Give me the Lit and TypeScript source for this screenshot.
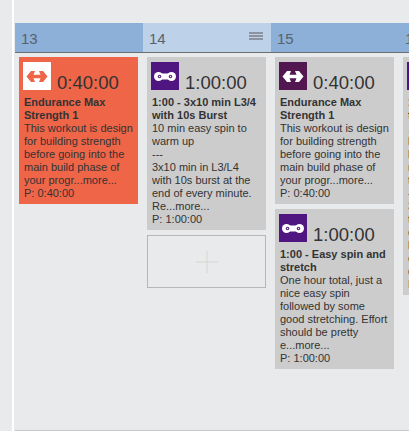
import { LitElement, html, css, svg } from 'lit';
import { customElement } from 'lit/decorators.js';

type Kind = 'strength' | 'bike';

interface Workout {
  kind: Kind;
  tone: string;
  duration: string;
  title: string[];
  body: string[];
  planned: string;
}

const dumbbell = (fill: string) => svg`
  <path fill=${fill} d="M0.500 6.500 L5 1 H9 L7.500 4.700 H14.500 L13 1 H17 L21.500 6.500 L17 12 H13 L14.500 8.300 H7.500 L9 12 H5 Z"/>
`;

const chain = (fill: string, tone: string) => svg`
  <circle cx="4.500" cy="4.500" r="4.500" fill=${fill}/>
  <circle cx="17.500" cy="4.500" r="4.500" fill=${fill}/>
  <rect x="4.500" y="1.500" width="13" height="6" fill=${fill}/>
  <circle cx="5.500" cy="4.500" r="1.700" fill=${tone}/>
  <circle cx="5.500" cy="4.500" r="0.700" fill=${fill}/>
  <circle cx="16.500" cy="4.500" r="1.700" fill=${tone}/>
  <circle cx="16.500" cy="4.500" r="0.700" fill=${fill}/>
`;

@customElement('workout-card')
class WorkoutCard extends LitElement {
  static properties = {
    workout: { attribute: false },
    variant: { type: String, reflect: true },
  };

  workout!: Workout;
  variant = '';

  static styles = css`
    :host {
      display: block;
      background: #cccccc;
      padding: 5px 0 4px 4px;
      color: #333333;
      font-family: "Liberation Sans", Arial, sans-serif;
      font-size: 11px;
      line-height: 13px;
      white-space: nowrap;
    }

    :host([variant="missed"]) {
      background: #ee6548;
    }

    .head {
      display: flex;
      align-items: flex-end;
      gap: 6px;
      margin-bottom: 6px;
    }

    .icon {
      width: 28px;
      height: 28px;
      display: flex;
      align-items: center;
      justify-content: center;
      flex: none;
    }

    .icon svg {
      display: block;
    }

    .duration {
      font-size: 18.500px;
      line-height: 20px;
      margin-bottom: -3px;
    }

    .text {
      padding-left: 1px;
    }

    .title {
      font-weight: 700;
    }
  `;

  render() {
    const w = this.workout;
    const white = '#ffffff';
    const mark = w.tone === white ? '#ee6548' : white;
    return html`
      <div class="head">
        <div class="icon" style="background:${w.tone}">
          ${w.kind === 'bike'
            ? html`<svg width="22" height="9" viewBox="0 0 22 9">${chain(mark, w.tone)}</svg>`
            : html`<svg width="22" height="13" viewBox="0 0 22 13">${dumbbell(mark)}</svg>`}
        </div>
        <div class="duration">${w.duration}</div>
      </div>
      <div class="text">
        ${w.title.map((line) => html`<div class="title">${line}</div>`)}
        ${w.body.map((line) => html`<div>${line}</div>`)}
        <div>P: ${w.planned}</div>
      </div>
    `;
  }
}

const maxStrength = ['This workout is design', 'for building strength', 'before going into the', 'main build phase of', 'your progr...more...'];

const endurance = (tone: string): Workout => ({
  kind: 'strength',
  tone,
  duration: '0:40:00',
  title: ['Endurance Max', 'Strength 1'],
  body: maxStrength,
  planned: '0:40:00',
});

const burst: Workout = {
  kind: 'bike',
  tone: '#4f1682',
  duration: '1:00:00',
  title: ['1:00 - 3x10 min L3/4', 'with 10s Burst'],
  body: ['10 min easy spin to', 'warm up', '---', '3x10 min in L3/L4', 'with 10s burst at the', 'end of every minute.', 'Re...more...'],
  planned: '1:00:00',
};

const stretch: Workout = {
  kind: 'bike',
  tone: '#4f1682',
  duration: '1:00:00',
  title: ['1:00 - Easy spin and', 'stretch'],
  body: ['One hour total, just a', 'nice easy spin', 'followed by some', 'good stretching. Effort', 'should be pretty', 'e...more...'],
  planned: '1:00:00',
};

const nextDay: Workout = {
  kind: 'bike',
  tone: '#4f1682',
  duration: '1:00:00',
  title: ['1:00 - Tempo', 'tempo'],
  body: ['10 min easy', 'build', 'build', 'ride', 'then', '---', '3x10 min', 'tempo', 'effort', 'build', 'cool', 'down'],
  planned: '1:00:00',
};

@customElement('app-root')
export class AppRoot extends LitElement {
  static styles = css`
    :host {
      display: block;
      width: 409px;
      height: 431px;
      overflow: hidden;
      background: #e9eaec;
      font-family: "Liberation Sans", Arial, sans-serif;
    }

    .page {
      display: flex;
      height: 431px;
    }

    .rail {
      width: 12px;
      flex: none;
      margin-right: 1px;
      border-right: 2px solid #ffffff;
    }

    .calendar {
      flex: 1;
      min-width: 0;
      padding-top: 23px;
      border-bottom: 1px solid #c8c8c8;
      overflow: hidden;
    }

    .week {
      display: grid;
      grid-template-columns: repeat(4, 128px);
    }

    .day {
      min-width: 0;
    }

    .day-head {
      height: 30px;
      box-sizing: border-box;
      border-bottom: 1px solid #6b6f74;
      background: #8db0d8;
      color: #56626e;
      font-size: 15px;
      line-height: 31px;
      padding-left: 6px;
      display: flex;
      justify-content: space-between;
    }

    .day-head.today {
      background: #bdd2e9;
    }

    .menu {
      display: block;
      margin: 9px 8px 0 0;
    }

    .cards {
      display: flex;
      flex-direction: column;
      gap: 5px;
      padding: 4px 5px 0 4px;
    }

    .add {
      height: 53px;
      box-sizing: border-box;
      border: 1px solid #b4b6b8;
      display: flex;
      align-items: center;
      justify-content: center;
    }
  `;

  render() {
    return html`
      <div class="page">
        <div class="rail"></div>
        <div class="calendar">
          <div class="week">
            <div class="day">
              <div class="day-head">13</div>
              <div class="cards">
                <workout-card variant="missed" .workout=${endurance('#ffffff')}></workout-card>
              </div>
            </div>
            <div class="day">
              <div class="day-head today">
                14
                <svg class="menu" width="14" height="8" viewBox="0 0 14 8">
                  <path d="M0 1h14M0 4h14M0 7h14" stroke="#8b949e" stroke-width="2"/>
                </svg>
              </div>
              <div class="cards">
                <workout-card .workout=${burst}></workout-card>
                <div class="add">
                  <svg width="22" height="22" viewBox="0 0 22 22">
                    <path d="M11 0v22" stroke="#d8d6d2" stroke-width="2" opacity="0.5"/>
                    <path d="M0 11h22" stroke="#d8d6d2" stroke-width="2" opacity="0.5"/>
                  </svg>
                </div>
              </div>
            </div>
            <div class="day">
              <div class="day-head">15</div>
              <div class="cards">
                <workout-card .workout=${endurance('#521650')}></workout-card>
                <workout-card .workout=${stretch}></workout-card>
              </div>
            </div>
            <div class="day">
              <div class="day-head">16</div>
              <div class="cards">
                <workout-card .workout=${nextDay}></workout-card>
              </div>
            </div>
          </div>
        </div>
      </div>
    `;
  }
}

void WorkoutCard;
